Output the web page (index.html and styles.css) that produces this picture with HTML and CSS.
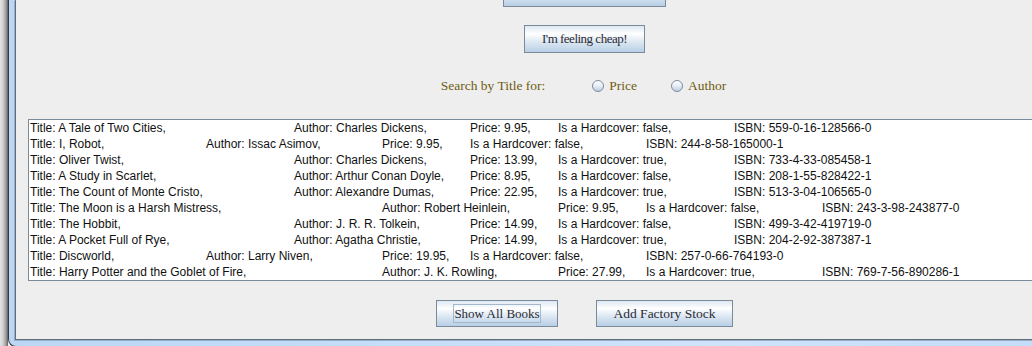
FILE: index.html
```html
<!DOCTYPE html>
<html>
<head>
<meta charset="utf-8">
<link rel="stylesheet" href="styles.css">
</head>
<body>
<div class="window">
  <div class="client">
    <button class="btn btn-top"></button>
    <button class="btn btn-cheap">I'm feeling cheap!</button>
    <div class="search">
      <span class="search-label">Search by Title for:</span>
      <label class="radio radio-price"><span class="radio-dot"></span><span class="radio-text">Price</span></label>
      <label class="radio radio-author"><span class="radio-dot"></span><span class="radio-text">Author</span></label>
    </div>
    <div class="textarea">
      <div class="line"><span>Title: A Tale of Two Cities,</span><span class="c4">Author: Charles Dickens,</span><span class="c6">Price: 9.95,</span><span class="c7">Is a Hardcover: false,</span><span class="c9">ISBN: 559-0-16-128566-0</span></div>
      <div class="line"><span>Title: I, Robot,</span><span class="c3">Author: Issac Asimov,</span><span class="c5">Price: 9.95,</span><span class="c6">Is a Hardcover: false,</span><span class="c8">ISBN: 244-8-58-165000-1</span></div>
      <div class="line"><span>Title: Oliver Twist,</span><span class="c4">Author: Charles Dickens,</span><span class="c6">Price: 13.99,</span><span class="c7">Is a Hardcover: true,</span><span class="c9">ISBN: 733-4-33-085458-1</span></div>
      <div class="line"><span>Title: A Study in Scarlet,</span><span class="c4">Author: Arthur Conan Doyle,</span><span class="c6">Price: 8.95,</span><span class="c7">Is a Hardcover: false,</span><span class="c9">ISBN: 208-1-55-828422-1</span></div>
      <div class="line"><span>Title: The Count of Monte Cristo,</span><span class="c4">Author: Alexandre Dumas,</span><span class="c6">Price: 22.95,</span><span class="c7">Is a Hardcover: true,</span><span class="c9">ISBN: 513-3-04-106565-0</span></div>
      <div class="line"><span>Title: The Moon is a Harsh Mistress,</span><span class="c5">Author: Robert Heinlein,</span><span class="c7">Price: 9.95,</span><span class="c8">Is a Hardcover: false,</span><span class="c10">ISBN: 243-3-98-243877-0</span></div>
      <div class="line"><span>Title: The Hobbit,</span><span class="c4">Author: J. R. R. Tolkein,</span><span class="c6">Price: 14.99,</span><span class="c7">Is a Hardcover: false,</span><span class="c9">ISBN: 499-3-42-419719-0</span></div>
      <div class="line"><span>Title: A Pocket Full of Rye,</span><span class="c4">Author: Agatha Christie,</span><span class="c6">Price: 14.99,</span><span class="c7">Is a Hardcover: true,</span><span class="c9">ISBN: 204-2-92-387387-1</span></div>
      <div class="line"><span>Title: Discworld,</span><span class="c3">Author: Larry Niven,</span><span class="c5">Price: 19.95,</span><span class="c6">Is a Hardcover: false,</span><span class="c8">ISBN: 257-0-66-764193-0</span></div>
      <div class="line"><span>Title: Harry Potter and the Goblet of Fire,</span><span class="c5">Author: J. K. Rowling,</span><span class="c7">Price: 27.99,</span><span class="c8">Is a Hardcover: true,</span><span class="c10">ISBN: 769-7-56-890286-1</span></div>
    </div>
    <div class="actions">
      <button class="btn btn-show"><span class="focus">Show All Books</span></button>
      <button class="btn btn-add">Add Factory Stock</button>
    </div>
  </div>
</div>
</body>
</html>
```
FILE: styles.css
```css
html, body {
  margin: 0;
  padding: 0;
}

body {
  width: 1032px;
  height: 346px;
  overflow: hidden;
  background: linear-gradient(90deg, #e4e4e4 0px, #cfcfcf 3px, #9c9c9c 6px, #606060 8px, #ececec 8px);
  font-family: "Liberation Sans", Arial, sans-serif;
}

.window {
  margin-left: 8px;
  width: 1200px;
  padding: 0 0 6px 6px;
  border-left: 1px solid #3a3a3a;
  border-bottom: 1px solid #3a3a3a;
  border-bottom-left-radius: 8px;
  background: linear-gradient(90deg, #bcd7f5 0px, #c2dcf8 300px, #cfe4fb 700px, #c4ddf8 1032px);
}

.client {
  width: 1137px;
  padding-bottom: 12px;
  border-left: 1px solid #5f6e7d;
  border-bottom: 1px solid #5f6e7d;
  box-shadow: -1px 1px 0 #98aec6;
  background: #eeeeee;
  display: flex;
  flex-direction: column;
  align-items: center;
}

.btn {
  box-sizing: border-box;
  height: 28px;
  padding: 0;
  margin: 0;
  border: 1px solid #7a8a99;
  background: linear-gradient(180deg, #dde8f3 0%, #ffffff 30%, #dde8f3 60%, #b8cfe5 100%);
  font-family: "Liberation Serif", "Times New Roman", serif;
  font-size: 13.5px;
  color: #2a2a33;
  white-space: nowrap;
  display: flex;
  align-items: center;
  justify-content: center;
}

.btn-top {
  width: 163px;
  margin-top: -21px;
}

.btn-cheap {
  width: 121px;
  margin-top: 18px;
  letter-spacing: -0.5px;
  font-size: 13px;
}

.search {
  margin-top: 21px;
  height: 24px;
  display: flex;
  align-items: center;
  font-family: "Liberation Serif", "Times New Roman", serif;
  font-size: 13.5px;
  color: #6e5c10;
}

.search-label {
  margin-right: 47px;
}

.radio {
  display: flex;
  align-items: center;
  gap: 5px;
}

.radio-price {
  margin-right: 34px;
}

.radio-author {
  margin-right: 2px;
}

.radio-dot {
  box-sizing: border-box;
  width: 12px;
  height: 12px;
  border-radius: 50%;
  border: 1px solid #7d8c9b;
  background: linear-gradient(180deg, #ffffff 0%, #e8eff7 45%, #bccfe2 100%);
}

.textarea {
  align-self: stretch;
  margin: 21px 12px 0 12px;
  height: 160px;
  padding-left: 1px;
  border: 1px solid #7a8a99;
  background: #ffffff;
  font-size: 12px;
  color: #111111;
}

.line {
  display: grid;
  grid-template-columns: repeat(12, 88px);
  height: 16px;
  line-height: 16px;
  white-space: nowrap;
}

.c3 { grid-column-start: 3; }
.c4 { grid-column-start: 4; }
.c5 { grid-column-start: 5; }
.c6 { grid-column-start: 6; }
.c7 { grid-column-start: 7; }
.c8 { grid-column-start: 8; }
.c9 { grid-column-start: 9; }
.c10 { grid-column-start: 10; }

.actions {
  margin-top: 19px;
  display: flex;
  gap: 38px;
}

.actions .btn {
  height: 27px;
}

.btn-show {
  width: 122px;
  font-size: 13px;
}

.btn-add {
  width: 137px;
}

.focus {
  box-sizing: border-box;
  width: 88px;
  height: 19px;
  border: 1px solid #a3b8cc;
  display: flex;
  align-items: center;
  justify-content: center;
  white-space: nowrap;
}
```
